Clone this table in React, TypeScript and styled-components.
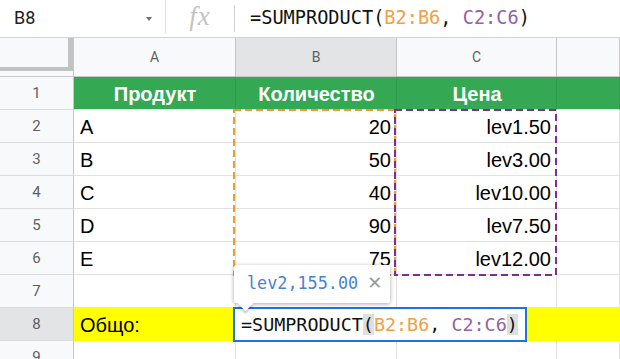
import React from 'react';
import styled, { createGlobalStyle, css } from 'styled-components';

const GlobalStyle = createGlobalStyle`
  html, body { margin: 0; padding: 0; background: #ffffff; overflow: hidden; }
  body { font-family: "Liberation Sans", Arial, sans-serif; }
`;

const MONO = `"DejaVu Sans Mono", "Liberation Mono", monospace`;

const Page = styled.div`
  width: 620px;
  height: 359px;
  overflow: hidden;
  background: #fff;
`;

/* ---------- formula bar ---------- */

const FormulaBar = styled.div`
  display: flex;
  align-items: stretch;
  height: 37px;
  border-bottom: 1px solid #d2d2d2;
  background: #fff;
`;

const NameBox = styled.div`
  width: 165px;
  box-sizing: border-box;
  display: flex;
  align-items: center;
  justify-content: space-between;
  padding: 0 13px 2px 14px;
  font-family: Roboto, "Liberation Sans", sans-serif;
  font-size: 18px;
  color: #202124;
`;

const Caret = styled.span`
  width: 0;
  height: 0;
  margin-top: 3px;
  border-left: 3px solid transparent;
  border-right: 3px solid transparent;
  border-top: 4px solid #6f6f6f;
`;

const Divider = styled.div<{ $top: number; $bottom: number; $color: string }>`
  width: 1px;
  margin: ${p => p.$top}px 0 ${p => p.$bottom}px;
  background: ${p => p.$color};
`;

const FxBox = styled.div`
  width: 68px;
  display: flex;
  align-items: center;
  justify-content: center;
  padding-bottom: 4px;
  box-sizing: border-box;
  font-family: "Liberation Serif", "DejaVu Serif", serif;
  font-style: italic;
  font-size: 27px;
  color: #c3c3c3;
  letter-spacing: 1px;
`;

const FormulaText = styled.div`
  display: flex;
  align-items: center;
  padding: 0 0 3px 15px;
  font-family: ${MONO};
  font-size: 18.6px;
  color: #111;
  white-space: pre;
`;

const Ref = styled.span<{ $color: string }>`
  color: ${p => p.$color};
`;

const Paren = styled.span<{ $hl?: boolean }>`
  ${p =>
    p.$hl &&
    css`
      background: #dedede;
    `}
`;

/* ---------- sheet grid ---------- */

const Sheet = styled.div`
  position: relative;
  display: grid;
  grid-template-columns: 74px 162px 161px 160px 1fr;
  grid-template-rows: 39px repeat(9, 33px);
`;

const Corner = styled.div`
  background: #f8f9fa;
  border-right: 1px solid #c7c7c7;
  border-bottom: 1px solid #c7c7c7;
  box-sizing: border-box;
`;

const FreezeHandle = styled.div`
  width: 73px;
  height: 33px;
  box-sizing: border-box;
  border-right: 5px solid #c2c2c2;
  border-bottom: 4px solid #c2c2c2;
`;

const ColHeader = styled.div<{ $active?: boolean }>`
  display: flex;
  align-items: center;
  justify-content: center;
  box-sizing: border-box;
  background: ${p => (p.$active ? '#e3e4e6' : '#f8f9fa')};
  border-right: 1px solid #c7c7c7;
  border-bottom: 1px solid #c7c7c7;
  font-family: Roboto, "Liberation Sans", sans-serif;
  font-size: 14px;
  color: #5f5f5f;
`;

const RowHeader = styled.div<{ $active?: boolean }>`
  display: flex;
  align-items: center;
  justify-content: center;
  box-sizing: border-box;
  background: ${p => (p.$active ? '#e3e4e6' : '#f8f9fa')};
  border-right: 1px solid #c7c7c7;
  border-bottom: 1px solid #dadada;
  font-family: Roboto, "Liberation Sans", sans-serif;
  font-size: 15px;
  color: #5f5f5f;
`;

type Fill = 'green' | 'yellow' | 'none';

const fills: Record<Fill, { bg: string; line: string; color: string }> = {
  green: { bg: '#34a853', line: '#2f9a4b', color: '#ffffff' },
  yellow: { bg: '#ffff00', line: '#ffff00', color: '#000000' },
  none: { bg: '#ffffff', line: '#e2e2e2', color: '#000000' },
};

const Cell = styled.div<{ $fill: Fill; $align: 'left' | 'right' | 'center'; $bold?: boolean }>`
  display: flex;
  align-items: flex-end;
  justify-content: ${p =>
    p.$align === 'left' ? 'flex-start' : p.$align === 'right' ? 'flex-end' : 'center'};
  box-sizing: border-box;
  padding: 0 5px 3px 6px;
  overflow: hidden;
  white-space: nowrap;
  background: ${p => fills[p.$fill].bg};
  color: ${p => fills[p.$fill].color};
  border-right: 1px solid ${p => fills[p.$fill].line};
  border-bottom: 1px solid ${p => (p.$fill === 'green' ? '#e2e2e2' : fills[p.$fill].line)};
  font-size: 20px;
  font-weight: ${p => (p.$bold ? 700 : 400)};
  line-height: 23px;
`;

/* ---------- overlays: range marquees, result hint, cell editor ---------- */

const MarqueeBox = styled.svg<{ $x: number; $y: number }>`
  position: absolute;
  left: ${p => p.$x}px;
  top: ${p => p.$y}px;
  pointer-events: none;
  overflow: visible;
`;

const Marquee: React.FC<{ x: number; y: number; w: number; h: number; color: string }> = ({
  x,
  y,
  w,
  h,
  color,
}) => (
  <MarqueeBox $x={x} $y={y} width={w} height={h}>
    <rect
      x={1}
      y={1}
      width={w - 2}
      height={h - 2}
      fill="none"
      stroke={color}
      strokeWidth={2}
      strokeDasharray="7 4"
    />
  </MarqueeBox>
);

const Hint = styled.div`
  position: absolute;
  left: 234px;
  top: 227px;
  width: 156px;
  height: 38px;
  box-sizing: border-box;
  display: flex;
  align-items: center;
  gap: 9px;
  padding: 0 0 2px 13px;
  background: #fff;
  border-radius: 2px;
  box-shadow: 0 1px 4px rgba(0, 0, 0, 0.35);
  z-index: 3;

  &::after {
    content: '';
    position: absolute;
    left: 6px;
    bottom: -6px;
    width: 11px;
    height: 11px;
    background: #fff;
    transform: rotate(45deg);
    box-shadow: 2px 2px 2px rgba(0, 0, 0, 0.2);
  }
`;

const HintValue = styled.span`
  font-family: ${MONO};
  font-size: 16.8px;
  color: #4a7fd6;
`;

const HintClose = styled.span`
  font-family: "DejaVu Sans", sans-serif;
  font-size: 18px;
  color: #9a9a9a;
  line-height: 1;
`;

const Editor = styled.div`
  position: absolute;
  left: 233px;
  top: 269px;
  width: 294px;
  height: 35px;
  box-sizing: border-box;
  display: flex;
  align-items: center;
  padding: 0 0 0 6px;
  background: #fff;
  border: 2px solid #1a73e8;
  font-family: ${MONO};
  font-size: 18.4px;
  color: #111;
  white-space: pre;
  z-index: 2;
`;

/* ---------- data ---------- */

type Row = { cells: [string, string, string, string]; fill?: Fill };

const rows: Row[] = [
  { cells: ['Продукт', 'Количество', 'Цена', ''], fill: 'green' },
  { cells: ['A', '20', 'lev1.50', ''] },
  { cells: ['B', '50', 'lev3.00', ''] },
  { cells: ['C', '40', 'lev10.00', ''] },
  { cells: ['D', '90', 'lev7.50', ''] },
  { cells: ['E', '75', 'lev12.00', ''] },
  { cells: ['', '', '', ''] },
  { cells: ['Общо:', '', '', ''], fill: 'yellow' },
  { cells: ['', '', '', ''] },
];

const ORANGE = '#f29b2c';
const PURPLE = '#7b2f8f';

const Formula: React.FC<{ highlight?: boolean }> = ({ highlight }) => (
  <>
    =SUMPRODUCT<Paren $hl={highlight}>(</Paren>
    <Ref $color="#f3a042">B2:B6</Ref>, <Ref $color="#94629f">C2:C6</Ref>
    <Paren $hl={highlight}>)</Paren>
  </>
);

export default function App() {
  return (
    <Page>
      <GlobalStyle />
      <FormulaBar>
        <NameBox>
          B8
          <Caret />
        </NameBox>
        <Divider $top={0} $bottom={4} $color="#e2e2e2" />
        <FxBox>fx</FxBox>
        <Divider $top={5} $bottom={5} $color="#cfcfcf" />
        <FormulaText>
          <Formula />
        </FormulaText>
      </FormulaBar>

      <Sheet>
        <Corner>
          <FreezeHandle />
        </Corner>
        {['A', 'B', 'C', ''].map((c, i) => (
          <ColHeader key={i} $active={c === 'B'}>
            {c}
          </ColHeader>
        ))}

        {rows.map((row, r) => {
          const n = r + 1;
          const fill = row.fill ?? 'none';
          return (
            <React.Fragment key={n}>
              <RowHeader $active={n === 8}>{n}</RowHeader>
              {row.cells.map((v, c) => {
                const numeric = n > 1 && c > 0;
                return (
                  <Cell
                    key={c}
                    $fill={fill}
                    $bold={fill === 'green'}
                    $align={fill === 'green' ? 'center' : numeric ? 'right' : 'left'}
                  >
                    {v}
                  </Cell>
                );
              })}
            </React.Fragment>
          );
        })}

        <Marquee x={233} y={71} w={163} h={167} color={ORANGE} />
        <Marquee x={394} y={71} w={163} h={167} color={PURPLE} />

        <Hint>
          <HintValue>lev2,155.00</HintValue>
          <HintClose>✕</HintClose>
        </Hint>

        <Editor>
          <Formula highlight />
        </Editor>
      </Sheet>
    </Page>
  );
}
